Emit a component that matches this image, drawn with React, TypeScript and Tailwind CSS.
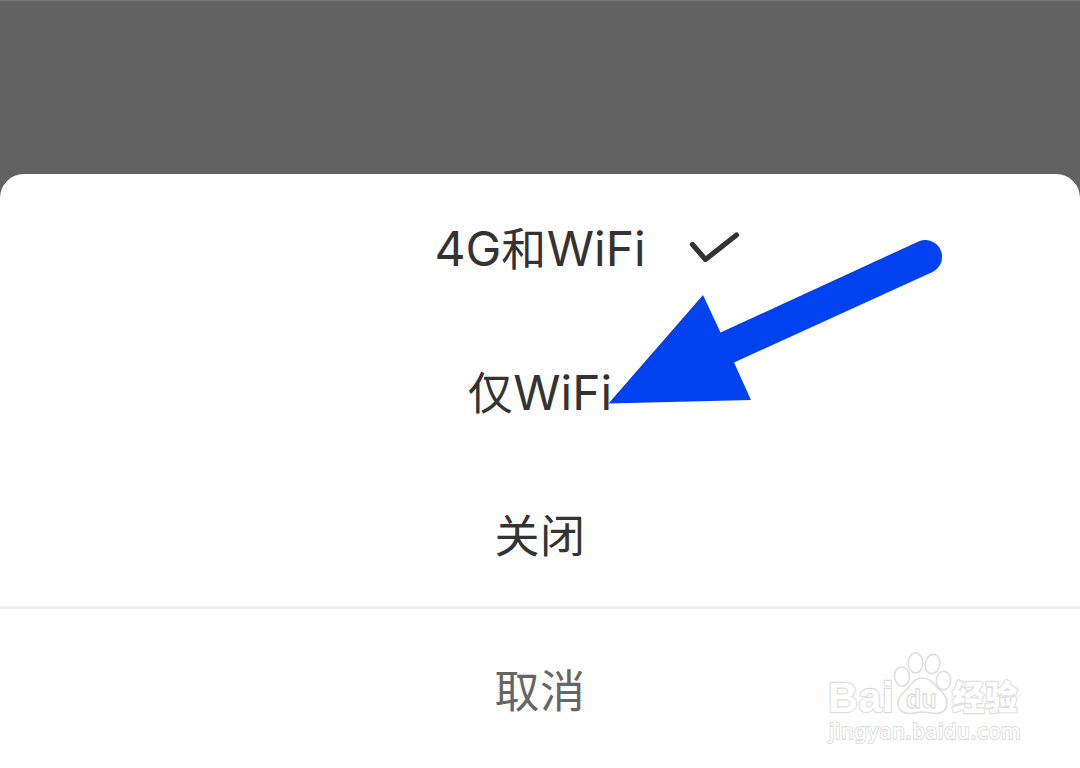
type Option = {
  label: string
  selected?: boolean
}

const options: Option[] = [
  { label: "4G和WiFi", selected: true },
  { label: "仅WiFi" },
  { label: "关闭" },
]

// Latin runs sit slightly larger than the Chinese characters
function Label({ text }: { text: string }) {
  return (
    <span>
      {text.split(/([A-Za-z0-9]+)/).map((part, i) =>
        i % 2 ? (
          <span key={i} className="text-[48px] font-[370] tracking-normal">{part}</span>
        ) : (
          part
        )
      )}
    </span>
  )
}

function CheckMark() {
  return (
    <svg
      className="absolute left-full top-1/2 ml-[41px] -mt-[19px]"
      width="54"
      height="36"
      viewBox="0 0 54 36"
      fill="none"
      aria-hidden="true"
    >
      <path d="M5.5 14.5L18.5 29.5L49.5 5" stroke="#333333" strokeWidth="5.2" strokeLinecap="round" strokeLinejoin="round" />
    </svg>
  )
}

function PointerArrow() {
  return (
    <svg
      className="absolute left-[600px] top-[229px] pointer-events-none"
      width="350"
      height="180"
      viewBox="600 230 350 180"
      aria-hidden="true"
    >
      <path
        d="M608.5 403.5L703 295L720.5 332.5L918 241.7A16.7 16.7 0 0 1 932.5 272L734 362.5L751 400Z"
        fill="#0042EF"
      />
    </svg>
  )
}

function Watermark() {
  return (
    <svg
      className="absolute left-[820px] top-[644px] pointer-events-none"
      width="220"
      height="118"
      viewBox="820 645 220 118"
      fill="#ffffff"
      stroke="#dedede"
      strokeWidth="1.6"
    >
      <g strokeLinejoin="round" fontWeight="700" strokeWidth="2.4" paintOrder="stroke">
        <text x="828" y="712" fontSize="42" textLength="66" lengthAdjust="spacingAndGlyphs" fontFamily="'Liberation Sans', sans-serif">
          Bai
        </text>
        <text x="952" y="710" fontSize="34" fontWeight="900" textLength="66" lengthAdjust="spacingAndGlyphs" fontFamily="'Liberation Sans', 'Noto Sans CJK SC', sans-serif">
          经验
        </text>
      </g>
      {/* paw */}
      <ellipse cx="902" cy="676.5" rx="7.5" ry="9.6" transform="rotate(-8 902 676.5)" />
      <ellipse cx="915.5" cy="663" rx="7.3" ry="10" />
      <ellipse cx="932.5" cy="664" rx="7.3" ry="9.7" transform="rotate(12 932.5 664)" />
      <ellipse cx="943.5" cy="680.5" rx="7.2" ry="9.2" transform="rotate(5 943.5 680.5)" />
      <path d="M922 678C914 678 911 685 906 690C901 695 898 698 898 703C898 710 903 713.5 909 713.5C914 713.5 917 712 922 712C928 712 931 713.5 936 713.5C942 713.5 947 710 947 703C947 697 943 693 938 688C933 683 930 678 922 678Z" />
      <text x="906" y="708" fontSize="26" fontWeight="700" strokeWidth="1.3" textLength="31" lengthAdjust="spacingAndGlyphs" fontFamily="'Liberation Sans', sans-serif">
        du
      </text>
      <text x="829" y="739" fontSize="21" strokeWidth="2.2" paintOrder="stroke" strokeLinejoin="round" textLength="192" lengthAdjust="spacingAndGlyphs" fontFamily="'DejaVu Sans', sans-serif">
        jingyan.baidu.com
      </text>
    </svg>
  )
}

export default function App() {
  return (
    <div className="relative flex h-[768px] w-[1080px] flex-col overflow-hidden border-t border-[#797979] bg-[#626262] pt-[173px] font-[Inter,'Noto_Sans_CJK_SC',sans-serif] text-[45px] leading-none tracking-[0.5px]">
      <div className="flex flex-1 flex-col rounded-t-3xl bg-white pt-[3px] text-[#333333]">
        <ul className="flex flex-col">
          {options.map((option) => (
            <li key={option.label} className="flex h-36 items-center justify-center last:h-[141px] last:pt-0.5">
              <button className="relative whitespace-nowrap">
                <Label text={option.label} />
                {option.selected && <CheckMark />}
              </button>
            </li>
          ))}
        </ul>
        <button className="flex flex-1 items-center justify-center border-t-[3px] border-[#eeeeee] pt-[6px] text-[#666666]">
          取消
        </button>
      </div>
      <PointerArrow />
      <Watermark />
    </div>
  )
}
